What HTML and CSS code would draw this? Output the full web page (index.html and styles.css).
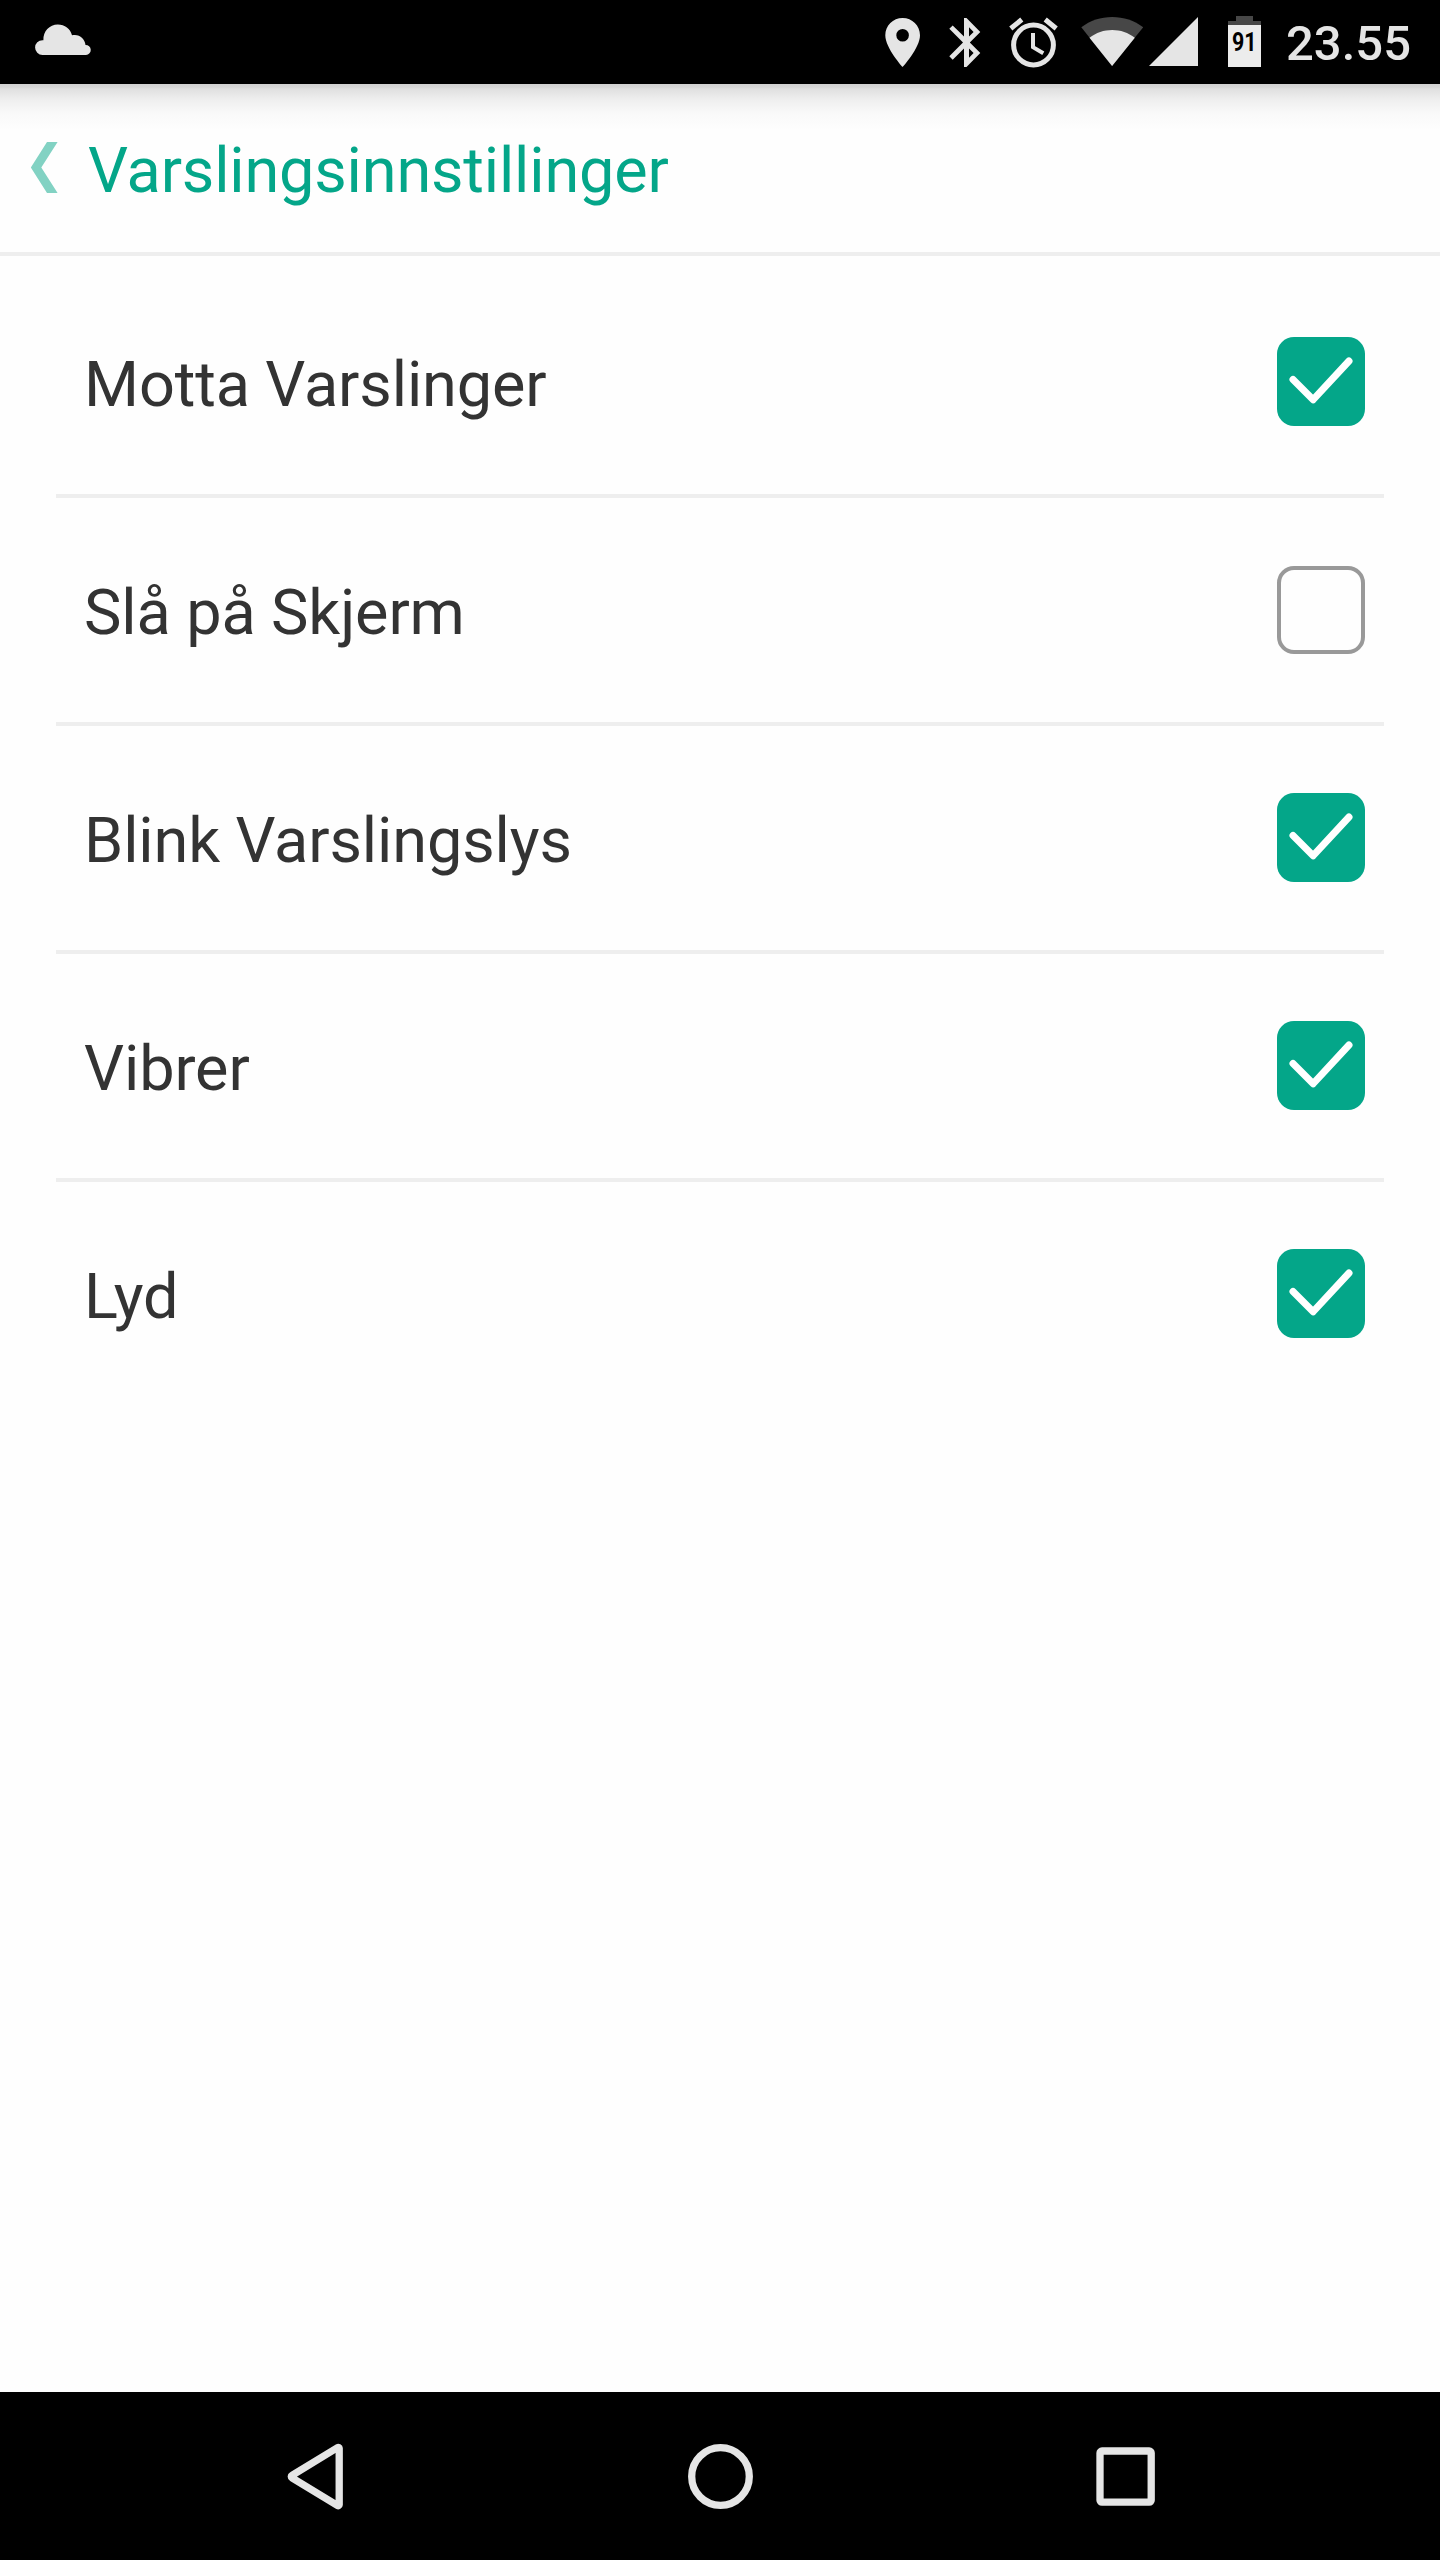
FILE: index.html
```html
<!DOCTYPE html>
<html lang="no">
<head>
<meta charset="UTF-8" />
<meta name="viewport" content="width=device-width" />
<title>Varslingsinnstillinger</title>
<link rel="stylesheet" href="styles.css">
</head>

<body>

<!-- status bar -->
<div class="status-bar">
	<svg class="cloud" width="56" height="84" viewBox="35 0 56 84"><path d="M42.5 55a7.3 7.3 0 0 1 0-14.8h.9C43 31.500 49.500 24.600 57.800 24.600c7 0 12.600 4.400 14.200 10.700 7-1.800 13 3.200 13.500 9.700a5 5 0 0 1 .5 10z"/></svg>
	<svg class="pin" width="36" height="84" viewBox="885 0 36 84"><path fill-rule="evenodd" d="M902.600 18c-9.600 0-17.300 7.700-17.300 17.200C885.300 48 902.600 67 902.600 67S920 48 920 35.200C920 25.700 912.200 18 902.600 18zm0 11a6.300 6.300 0 1 1 0 12.600 6.300 6.300 0 0 1 0-12.600z"/></svg>
	<svg class="bluetooth" width="32" height="84" viewBox="949 0 32 84"><path fill-rule="evenodd" d="M964 18h2.500L980.300 32 969.800 42.500 980.300 53 966.500 67H964V48.500L952.700 59.700 949.300 56.300 963 42.500 949.300 28.800 952.700 25.400 964 36.500zM969 27.300V36.600L973.600 32zM969 48.400V57.700L973.600 53z"/></svg>
	<svg class="alarm" width="50" height="84" viewBox="1009 0 50 84"><g class="line"><circle cx="1033.500" cy="45" r="19.900" stroke-width="5"/><path stroke-width="4" d="M1033 33v14.200l10.300 6"/><path stroke-width="5" d="M1010.800 28.500l11-9M1056.200 28.500l-11-9"/></g></svg>
	<svg class="wifi" width="63" height="84" viewBox="1081 0 63 84"><path class="dim" d="M1112 66L1081.300 27.300C1090 20.500 1101 17 1112.200 17s22.300 3.500 31 10.300z"/><path d="M1112.100 66L1089.500 37.700c6.500-5 14.500-7.700 22.700-7.700s16.100 2.700 22.600 7.700z"/></svg>
	<svg class="signal" width="49" height="84" viewBox="1149 0 49 84"><path d="M1149 66h49V17z"/></svg>
	<svg class="battery" width="33" height="84" viewBox="1228 0 33 84"><path class="dim" d="M1228 25v-4h8v-5h17v5h8v4z"/><path class="level" d="M1228 25h33v42h-33z"/><text x="1244.200" y="51.200" textLength="24.500" lengthAdjust="spacingAndGlyphs">91</text></svg>
	<span class="time">23.55</span>
</div>
<!-- /status bar -->

<!-- header -->
<div class="header">
	<svg class="back" width="27" height="52" viewBox="0 0 27 52"><path d="M16 0h10.600L10.300 25.500 26.600 51H16L-.2 25.500z"/></svg>
	<h1>Varslingsinnstillinger</h1>
</div>
<!-- /header -->

<!-- settings -->
<ul class="settings">
	<li>
		<span class="label">Motta Varslinger</span>
		<span class="checkbox checked"><svg width="88" height="88" viewBox="0 0 88 88"><path d="M16 42.500L36.200 62.700 72 24"/></svg></span>
	</li>
	<li>
		<span class="label">Slå på Skjerm</span>
		<span class="checkbox"></span>
	</li>
	<li>
		<span class="label">Blink Varslingslys</span>
		<span class="checkbox checked"><svg width="88" height="88" viewBox="0 0 88 88"><path d="M16 42.500L36.200 62.700 72 24"/></svg></span>
	</li>
	<li>
		<span class="label">Vibrer</span>
		<span class="checkbox checked"><svg width="88" height="88" viewBox="0 0 88 88"><path d="M16 42.500L36.200 62.700 72 24"/></svg></span>
	</li>
	<li>
		<span class="label">Lyd</span>
		<span class="checkbox checked"><svg width="88" height="88" viewBox="0 0 88 88"><path d="M16 42.500L36.200 62.700 72 24"/></svg></span>
	</li>
</ul>
<!-- /settings -->

<!-- navigation bar -->
<div class="nav-bar">
	<svg width="80" height="80" viewBox="275.500 2436 80 80"><path d="M338.700 2448.300v56.500a1 1 0 0 1-1.500.8l-45.700-27.700a1.500 1.500 0 0 1 0-2.600l45.700-27.800a1 1 0 0 1 1.500.8z"/></svg>
	<svg width="80" height="80" viewBox="681 2436 80 80"><circle cx="720.500" cy="2476.500" r="28.800"/></svg>
	<svg width="80" height="80" viewBox="1086 2436 80 80"><rect x="1100" y="2451" width="51.200" height="51.200" rx="2"/></svg>
</div>
<!-- /navigation bar -->

</body>
</html>
```

FILE: styles.css
```css
/* -------------------------------------
		GLOBAL
------------------------------------- */
* {
	margin: 0;
	padding: 0;
	box-sizing: border-box;
}

body {
	display: flex;
	flex-direction: column;
	width: 1440px;
	height: 2560px;
	background: #fefefe;
	font-family: Roboto, "Liberation Sans", sans-serif;
	color: #333;
}

svg {
	display: block;
	flex: none;
}


/* -------------------------------------
		STATUS BAR
------------------------------------- */
.status-bar {
	display: flex;
	flex: none;
	height: 84px;
	padding: 0 0 0 35px;
	background: #000;
	fill: #e5e5e5;
}

.status-bar .line {
	fill: none;
	stroke: #e5e5e5;
}

.status-bar .dim {
	fill: #474747;
}

.status-bar .level {
	fill: #ececec;
}

.pin {
	margin-left: 794px;
}

.bluetooth, .alarm {
	margin-left: 28px;
}

.wifi {
	margin-left: 22px;
}

.signal {
	margin-left: 5px;
}

.battery {
	margin-left: 30px;
}

.battery text {
	fill: #000;
	font-size: 25px;
	font-weight: bold;
	text-anchor: middle;
}

.time {
	margin-left: 25px;
	color: #e5e5e5;
	font-size: 49px;
	font-weight: 500;
	line-height: 88px;
}


/* -------------------------------------
		HEADER
------------------------------------- */
.header {
	display: flex;
	flex: none;
	align-items: center;
	height: 172px;
	padding-left: 31px;
	border-bottom: 4px solid #eee;
	background: linear-gradient(#d2d2d2, #d6d6d6 3px, #e0e0e0 5px, #efefef 16px, #f9f9f9 29px, #fefefe 46px);
}

.back {
	fill: #82d2c3;
}

.header h1 {
	margin-left: 30px;
	padding-top: 6px;
	color: #04a689;
	font-size: 63px;
	font-weight: normal;
	letter-spacing: -0.17px;
	line-height: 76px;
}


/* -------------------------------------
		SETTINGS
------------------------------------- */
.settings {
	flex: 1;
	padding: 14px 56px 0;
	list-style: none;
}

.settings li {
	display: flex;
	align-items: center;
	justify-content: space-between;
	height: 228px;
	padding: 0 19px 0 28px;
	border-bottom: 4px solid #eee;
}

.settings li:last-child {
	border-bottom-color: transparent;
}

.label {
	padding-top: 6px;
	font-size: 63px;
	letter-spacing: -0.12px;
	line-height: 76px;
}

.checkbox {
	width: 88px;
	height: 88px;
	border: 4px solid #999;
	border-radius: 17px;
}

.checkbox.checked {
	height: 89px;
	margin-bottom: 1px;
	border: 0;
	background: #04a689;
}

.checkbox path {
	fill: none;
	stroke: #fff;
	stroke-width: 7;
	stroke-linecap: round;
	stroke-linejoin: round;
}


/* -------------------------------------
		NAVIGATION BAR
------------------------------------- */
.nav-bar {
	display: flex;
	flex: none;
	align-items: center;
	justify-content: space-between;
	height: 168px;
	padding: 0 274px 0 276px;
	background: #000;
	fill: none;
	stroke: #e5e5e5;
	stroke-width: 7.3;
	stroke-linejoin: round;
}
```
